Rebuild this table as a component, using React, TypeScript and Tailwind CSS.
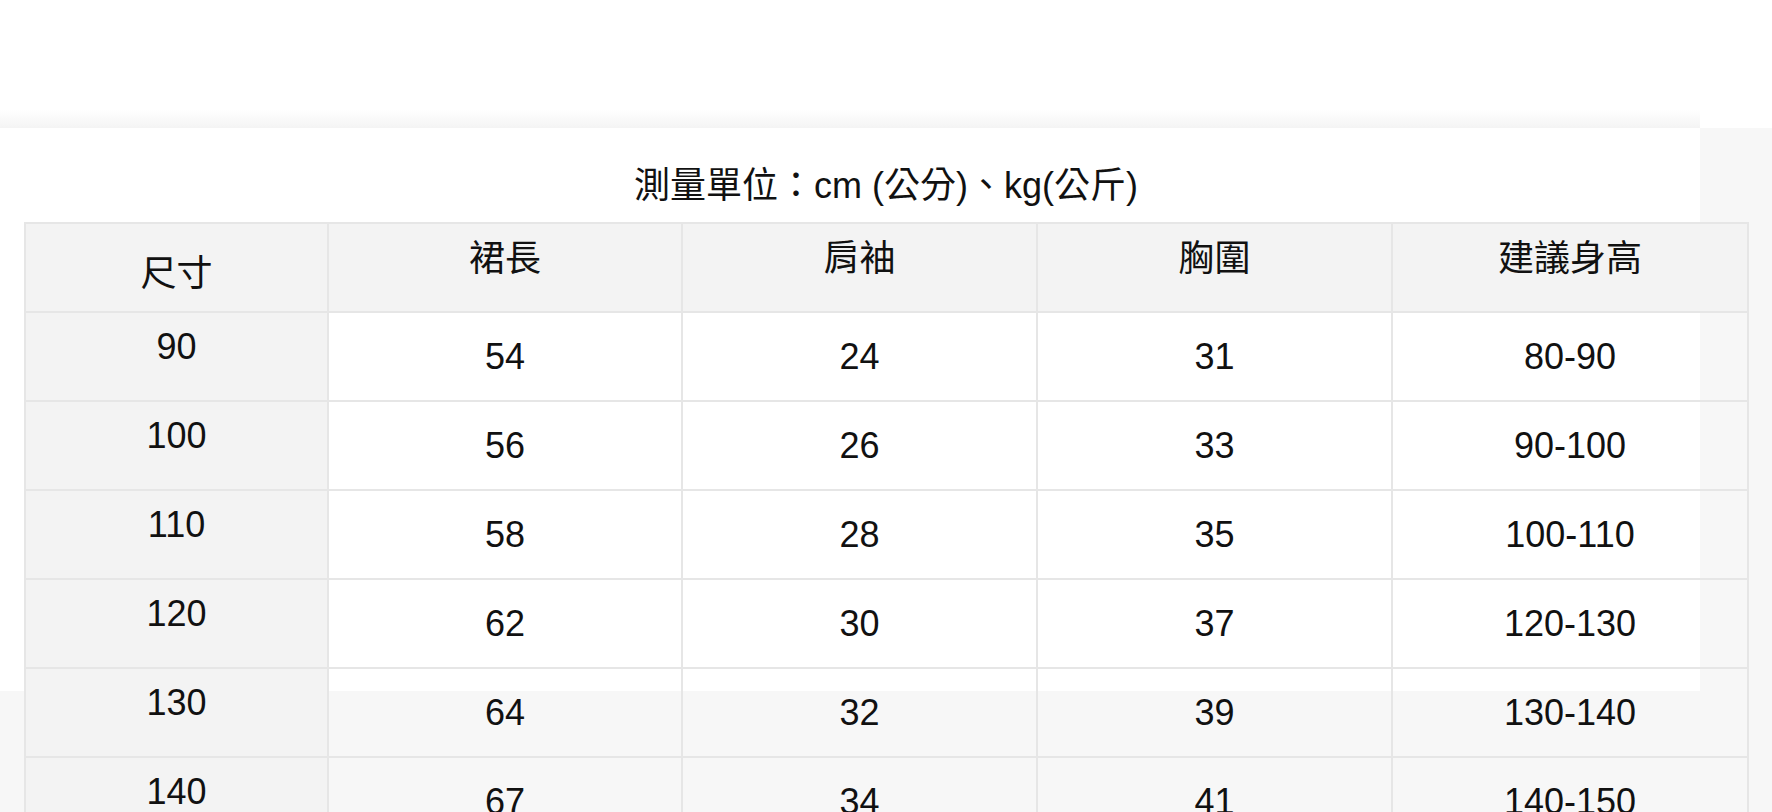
const rows = [
  { size: "90", skirt: "54", sleeve: "24", chest: "31", height: "80-90" },
  { size: "100", skirt: "56", sleeve: "26", chest: "33", height: "90-100" },
  { size: "110", skirt: "58", sleeve: "28", chest: "35", height: "100-110" },
  { size: "120", skirt: "62", sleeve: "30", chest: "37", height: "120-130" },
  { size: "130", skirt: "64", sleeve: "32", chest: "39", height: "130-140" },
  { size: "140", skirt: "67", sleeve: "34", chest: "41", height: "140-150" }
];

const gridCols = "grid grid-cols-[303px_354px_355px_355px_356px]";
const cellBase = "flex h-[87px] items-center justify-center border-r-2 border-[#e6e6e6]";

export default function App() {
  return (
    <div
      className="relative h-[812px] w-[1772px] overflow-hidden bg-white text-[36px] text-[#111]"
      style={{ fontFamily: '"Liberation Sans", "Noto Sans CJK TC", sans-serif' }}
    >
      {/* backdrop: white panel with a soft top fade over the grey page */}
      <div className="absolute left-0 right-0 top-[128px] bottom-0 bg-[#f7f7f7]" />
      <div className="absolute left-0 top-[110px] h-[18px] w-[1700px] bg-gradient-to-b from-white to-[#f4f4f4]" />
      <div className="absolute left-0 top-[128px] h-[563px] w-[1700px] bg-white" />

      <div className="relative pt-[166px]">
        <p className="text-center leading-[40px]">測量單位：cm (公分)、kg(公斤)</p>

        <div className="ml-[24px] mt-[16px] w-[1725px] border-l-2 border-t-2 border-[#e6e6e6]">
          <div className={`${gridCols} border-b-2 border-[#e6e6e6] bg-[#f3f3f3]`}>
            <div className={`${cellBase} pt-[13px]`}>尺寸</div>
            <div className={`${cellBase} pb-[17px]`}>裙長</div>
            <div className={`${cellBase} pb-[17px]`}>肩袖</div>
            <div className={`${cellBase} pb-[17px]`}>胸圍</div>
            <div className={`${cellBase} pb-[17px]`}>建議身高</div>
          </div>

          {rows.map((row) => (
            <div key={row.size} className={`${gridCols} border-b-2 border-[#e6e6e6]`}>
              <div className={`${cellBase} bg-[#f3f3f3] pb-[20px]`}>{row.size}</div>
              <div className={cellBase}>{row.skirt}</div>
              <div className={cellBase}>{row.sleeve}</div>
              <div className={cellBase}>{row.chest}</div>
              <div className={cellBase}>{row.height}</div>
            </div>
          ))}
        </div>
      </div>
    </div>
  );
}
